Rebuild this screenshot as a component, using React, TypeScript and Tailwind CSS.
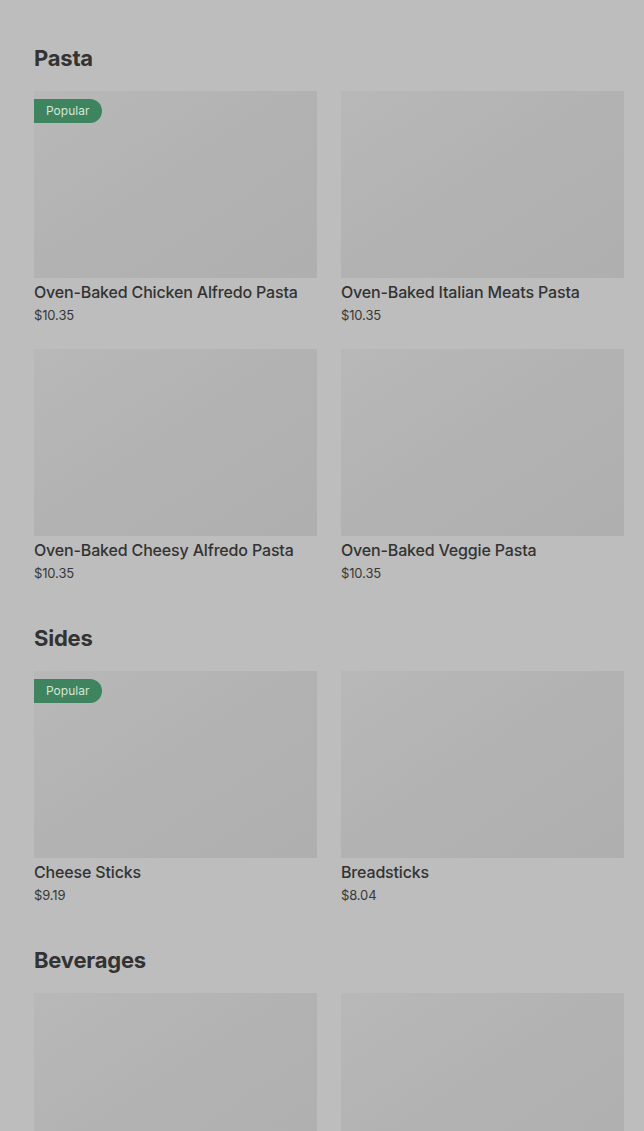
const sections = [
  {
    name: "Pasta",
    items: [
      { title: "Oven-Baked Chicken Alfredo Pasta", price: "$10.35", popular: true },
      { title: "Oven-Baked Italian Meats Pasta", price: "$10.35" },
      { title: "Oven-Baked Cheesy Alfredo Pasta", price: "$10.35" },
      { title: "Oven-Baked Veggie Pasta", price: "$10.35" },
    ],
  },
  {
    name: "Sides",
    items: [
      { title: "Cheese Sticks", price: "$9.19", popular: true },
      { title: "Breadsticks", price: "$8.04" },
    ],
  },
  {
    name: "Beverages",
    items: [
      { title: "Coke", price: "$2.99" },
      { title: "Sprite", price: "$2.99" },
    ],
  },
];

type Item = { title: string; price: string; popular?: boolean };

function MenuCard({ item }: { item: Item }) {
  return (
    <div className="flex flex-col">
      <div className="relative h-[187px] bg-gradient-to-br from-[#b8b8b8] via-[#b2b2b2] to-[#afafaf]">
        {item.popular && (
          <span className="absolute left-0 top-2 flex h-6 items-center rounded-r-full bg-[#3e845f] pl-3 pr-[13px] text-[12px] text-[#d3e6da]">
            Popular
          </span>
        )}
      </div>
      <div className="mt-[2px] text-[16px] font-medium leading-6 tracking-[-0.01em] text-[#333333]">
        {item.title}
      </div>
      <div className="mt-px text-[13px] leading-5 tracking-[-0.01em] text-[#383838]">{item.price}</div>
    </div>
  );
}

export default function App() {
  return (
    <div
      className="h-[1131px] overflow-hidden bg-[#bdbdbd] pl-[34px] pr-[20px]"
      style={{ fontFamily: "Inter, 'Noto Sans', sans-serif" }}
    >
      <div className="-mt-[17px] grid grid-cols-2 gap-x-6 text-[13px] leading-5 text-[#383838]">
        <div>$10.35</div>
        <div>$10.35</div>
      </div>
      {sections.map((section) => (
        <section key={section.name} className="mt-[39px]">
          <h2 className="text-[22px] font-bold leading-8 tracking-[-0.01em] text-[#333333]">
            {section.name}
          </h2>
          <div className="mt-[17px] grid grid-cols-2 gap-x-6 gap-y-6">
            {section.items.map((item) => (
              <MenuCard key={item.title} item={item} />
            ))}
          </div>
        </section>
      ))}
    </div>
  );
}
